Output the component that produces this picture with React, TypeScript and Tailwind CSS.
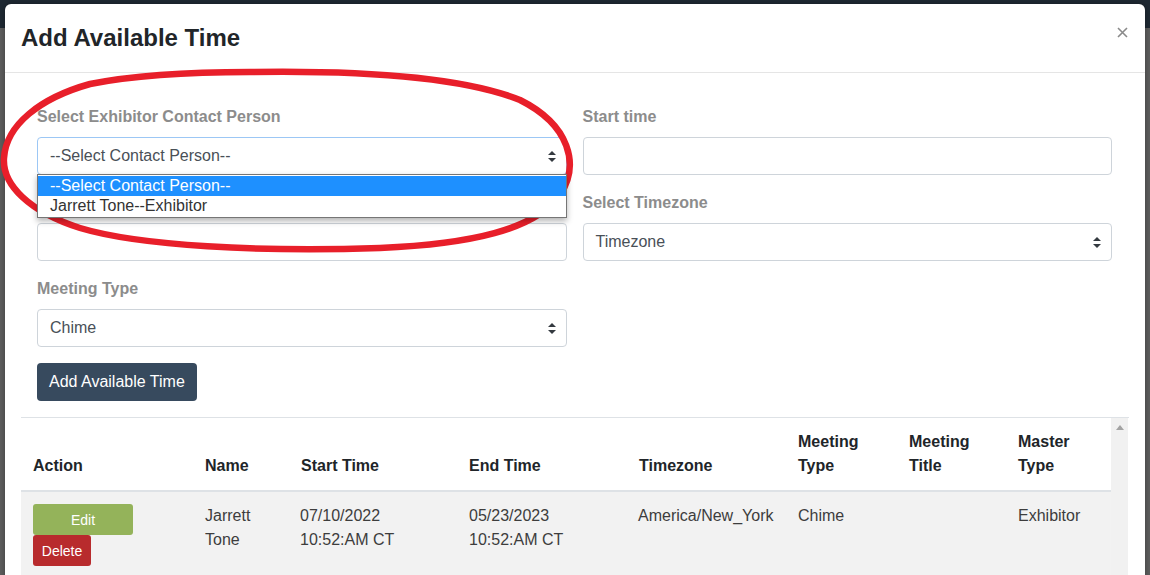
import React from 'react';

const font = { fontFamily: '"Liberation Sans", Arial, sans-serif' };

function Arrows() {
  return (
    <svg width="8" height="11" viewBox="0 0 8 11" className="shrink-0">
      <path d="M4 0 L8 4 L0 4 Z" fill="#343a40" />
      <path d="M0 7 L8 7 L4 11 Z" fill="#343a40" />
    </svg>
  );
}

function Label({ children }: { children: React.ReactNode }) {
  return <div className="mb-[10px] text-[16px] font-bold leading-[21px] text-[#8c8c8c]">{children}</div>;
}

function Select({ value, focused }: { value: string; focused?: boolean }) {
  return (
    <div
      className={`flex h-[38px] items-center justify-between rounded-[4px] border bg-white pl-3 pr-[10px] text-[16px] text-[#495057] ${
        focused ? 'border-[#9cc7f5]' : 'border-[#ced4da]'
      }`}
    >
      <span>{value}</span>
      <Arrows />
    </div>
  );
}

function Input() {
  return <div className="h-[38px] rounded-[4px] border border-[#ced4da] bg-white" />;
}

const cols = 'grid grid-cols-[172px_96px_168px_170px_159px_111px_109px_105px]';

export default function App() {
  return (
    <div
      style={font}
      className="relative h-[575px] w-[1150px] overflow-hidden bg-[linear-gradient(to_bottom,#1f2933_0,#1f2933_28px,#5e5e5e_28px)] px-[5px] pt-[4px]"
    >
      <div className="relative h-[600px] rounded-t-[6px] bg-white shadow-[0_0_6px_rgba(0,0,0,0.35)]">
        {/* header */}
        <div className="flex items-center justify-between border-b border-[#e5e5e5] px-4 py-4">
          <h4 className="text-[24px] font-bold leading-[36px] text-[#212529]">Add Available Time</h4>
          <svg width="11" height="11" viewBox="0 0 11 11" className="mr-[1px] mt-[-12px]">
            <path d="M1 1 L10 10 M10 1 L1 10" stroke="#8a8a8a" strokeWidth="1.6" />
          </svg>
        </div>

        {/* form */}
        <div className="pl-[32px] pr-[33px] pt-[33px]">
          <div className="grid grid-cols-2 gap-x-4">
            <div className="relative mb-[17px]">
              <Label>Select Exhibitor Contact Person</Label>
              <Select value="--Select Contact Person--" focused />
              <div className="absolute left-0 right-0 top-[68px] z-10 border border-[#767676] bg-white py-[1px] text-[16px] leading-[20px] shadow-[0_3px_6px_rgba(0,0,0,0.3)]">
                <div className="bg-[#1e90ff] pl-3 text-white">--Select Contact Person--</div>
                <div className="pl-3 text-[#333]">Jarrett Tone--Exhibitor</div>
              </div>
            </div>
            <div className="mb-[17px]">
              <Label>Start time</Label>
              <Input />
            </div>
            <div className="mb-[17px]">
              <Label>End time</Label>
              <Input />
            </div>
            <div className="mb-[17px]">
              <Label>Select Timezone</Label>
              <Select value="Timezone" />
            </div>
            <div className="mb-4">
              <Label>Meeting Type</Label>
              <Select value="Chime" />
            </div>
          </div>
          <button className="h-[38px] rounded-[4px] bg-[#374a5e] px-3 text-[16px] text-white">
            Add Available Time
          </button>
        </div>

        {/* table */}
        <div className="mx-4 mt-4 flex border-t border-[#dee2e6]">
          <div className="w-[1090px]">
            <div className={`${cols} items-end border-b-2 border-[#dee2e6] text-[16px] font-bold leading-6 text-[#212529]`}>
              <div className="p-3">Action</div>
              <div className="p-3">Name</div>
              <div className="p-3">Start Time</div>
              <div className="p-3">End Time</div>
              <div className="p-3">Timezone</div>
              <div className="p-3">
                Meeting
                <br />
                Type
              </div>
              <div className="p-3">
                Meeting
                <br />
                Title
              </div>
              <div className="p-3">
                Master
                <br />
                Type
              </div>
            </div>
            <div className={`${cols} h-[120px] bg-[#f2f2f2] text-[16px] leading-6 text-[#3d3d3d]`}>
              <div className="flex flex-col items-start p-3">
                <button className="h-[31px] w-[100px] rounded-[3px] bg-[#94b35a] text-[14px] text-white">Edit</button>
                <button className="h-[31px] w-[58px] rounded-[3px] bg-[#b82b2d] text-[14px] text-white">Delete</button>
              </div>
              <div className="p-3">
                Jarrett
                <br />
                Tone
              </div>
              <div className="p-3 pl-[11px]">
                07/10/2022
                <br />
                10:52:AM CT
              </div>
              <div className="p-3">
                05/23/2023
                <br />
                10:52:AM CT
              </div>
              <div className="p-3 pl-[11px]">America/New_York</div>
              <div className="p-3">Chime</div>
              <div className="p-3"></div>
              <div className="p-3">Exhibitor</div>
            </div>
          </div>
          <div className="flex w-[17px] justify-center bg-[#f1f1f1] pt-[7px]">
            <svg width="8" height="5" viewBox="0 0 8 5">
              <path d="M4 0 L8 5 L0 5 Z" fill="#a3a3a3" />
            </svg>
          </div>
        </div>
      </div>

      {/* red hand-drawn ellipse annotation */}
      <svg className="pointer-events-none absolute left-0 top-0" width="600" height="290" viewBox="0 0 600 290">
        <path
          d="M250 72 C 380 70 470 80 520 100 C 570 125 580 165 560 195 C 535 230 470 244 380 248 C 260 252 140 246 80 228 C 30 212 2 185 4 158 C 6 125 40 98 90 84 C 140 74 200 72 250 72 Z"
          fill="none"
          stroke="#e81f2a"
          strokeWidth="6.5"
        />
      </svg>
    </div>
  );
}
